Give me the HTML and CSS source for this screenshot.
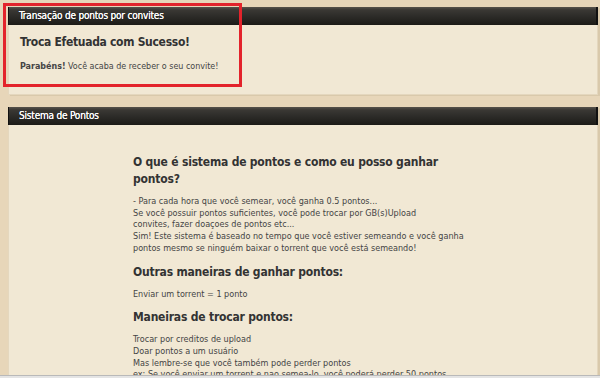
FILE: index.html
```html
<!DOCTYPE html>
<html lang="pt-BR">

<head>
    <meta charset="UTF-8">
    <title>Sistema de Pontos</title>
    <link rel="stylesheet" href="styles.css">
</head>

<body>
    <div class="page">
        <!-- Resultado da troca -->
        <div class="box">
            <div class="box-head">Transação de pontos por convites</div>
            <div class="box-body result">
                <h2>Troca Efetuada com Sucesso!</h2>
                <p><b>Parabéns!</b> Você acaba de receber o seu convite!</p>
            </div>
        </div>

        <!-- Explicação do sistema -->
        <div class="box">
            <div class="box-head">Sistema de Pontos</div>
            <div class="box-body info">
                <h3>O que é sistema de pontos e como eu posso ganhar pontos?</h3>
                <p>- Para cada hora que você semear, você ganha 0.5 pontos...<br>
                    Se você possuir pontos suficientes, você pode trocar por GB(s)Upload<br>
                    convites, fazer doaçoes de pontos etc...<br>
                    Sim! Este sistema é baseado no tempo que você estiver semeando e você ganha<br>
                    pontos mesmo se ninguém baixar o torrent que você está semeando!</p>

                <h3>Outras maneiras de ganhar pontos:</h3>
                <p>Enviar um torrent = 1 ponto</p>

                <h3>Maneiras de trocar pontos:</h3>
                <p>Trocar por creditos de upload<br>
                    Doar pontos a um usuário<br>
                    Mas lembre-se que você também pode perder pontos<br>
                    ex: Se você enviar um torrent e nao semea-lo, você poderá perder 50 pontos...</p>
            </div>
        </div>
    </div>

    <div class="highlight"></div>
    <div class="bottom-bar"></div>
</body>

</html>
```

FILE: styles.css
```css
* {
    margin: 0;
    padding: 0;
    box-sizing: border-box;
}

body {
    background: #e7d6b9;
    font-family: "DejaVu Sans Condensed", "DejaVu Sans", sans-serif;
    font-stretch: condensed;
    color: #444;
    height: 378px;
    overflow: hidden;
}

.page {
    padding: 7px 2px 0 8px;
    display: flex;
    flex-direction: column;
    gap: 12px;
}

/* Caixas */
.box {
    background: #f1e8d4;
    box-shadow: 2px 1px 0 #d9c9ab;
}

.box-head {
    height: 18px;
    padding: 0 10px;
    line-height: 18px;
    font-size: 10px;
    letter-spacing: -0.2px;
    color: #fff;
    text-shadow: 0 0 0.5px #fff;
    background: linear-gradient(#57524b 0, #3a3834 3px, #2d2c29 9px, #1c1b17 100%);
    border-left: 1px solid #111;
    border-right: 2px solid #111;
}

.box-body {
    border: 1px solid #e4d7be;
    border-top: none;
}

.result {
    height: 70px;
    padding: 10px 11px 0;
}

.result h2 {
    font-size: 12px;
    letter-spacing: -0.3px;
    color: #333;
    margin-bottom: 12px;
}

.result p {
    font-size: 8.9px;
}

.info {
    height: 262px;
    padding: 29px 40px 0 124px;
}

.info h3 {
    font-size: 12px;
    letter-spacing: -0.2px;
    line-height: 17px;
    color: #333;
    width: 330px;
    margin-bottom: 8px;
}

.info p {
    font-size: 9px;
    line-height: 11.7px;
    margin-bottom: 9px;
}

/* Marcação vermelha */
.highlight {
    position: absolute;
    left: 3px;
    top: 3px;
    width: 239px;
    height: 84px;
    border: 3px solid #e3232b;
}

.bottom-bar {
    position: absolute;
    left: 0;
    right: 0;
    bottom: 0;
    height: 3px;
    background: #e4e4e4;
    border-top: 1px solid #b9b9b9;
}
```
